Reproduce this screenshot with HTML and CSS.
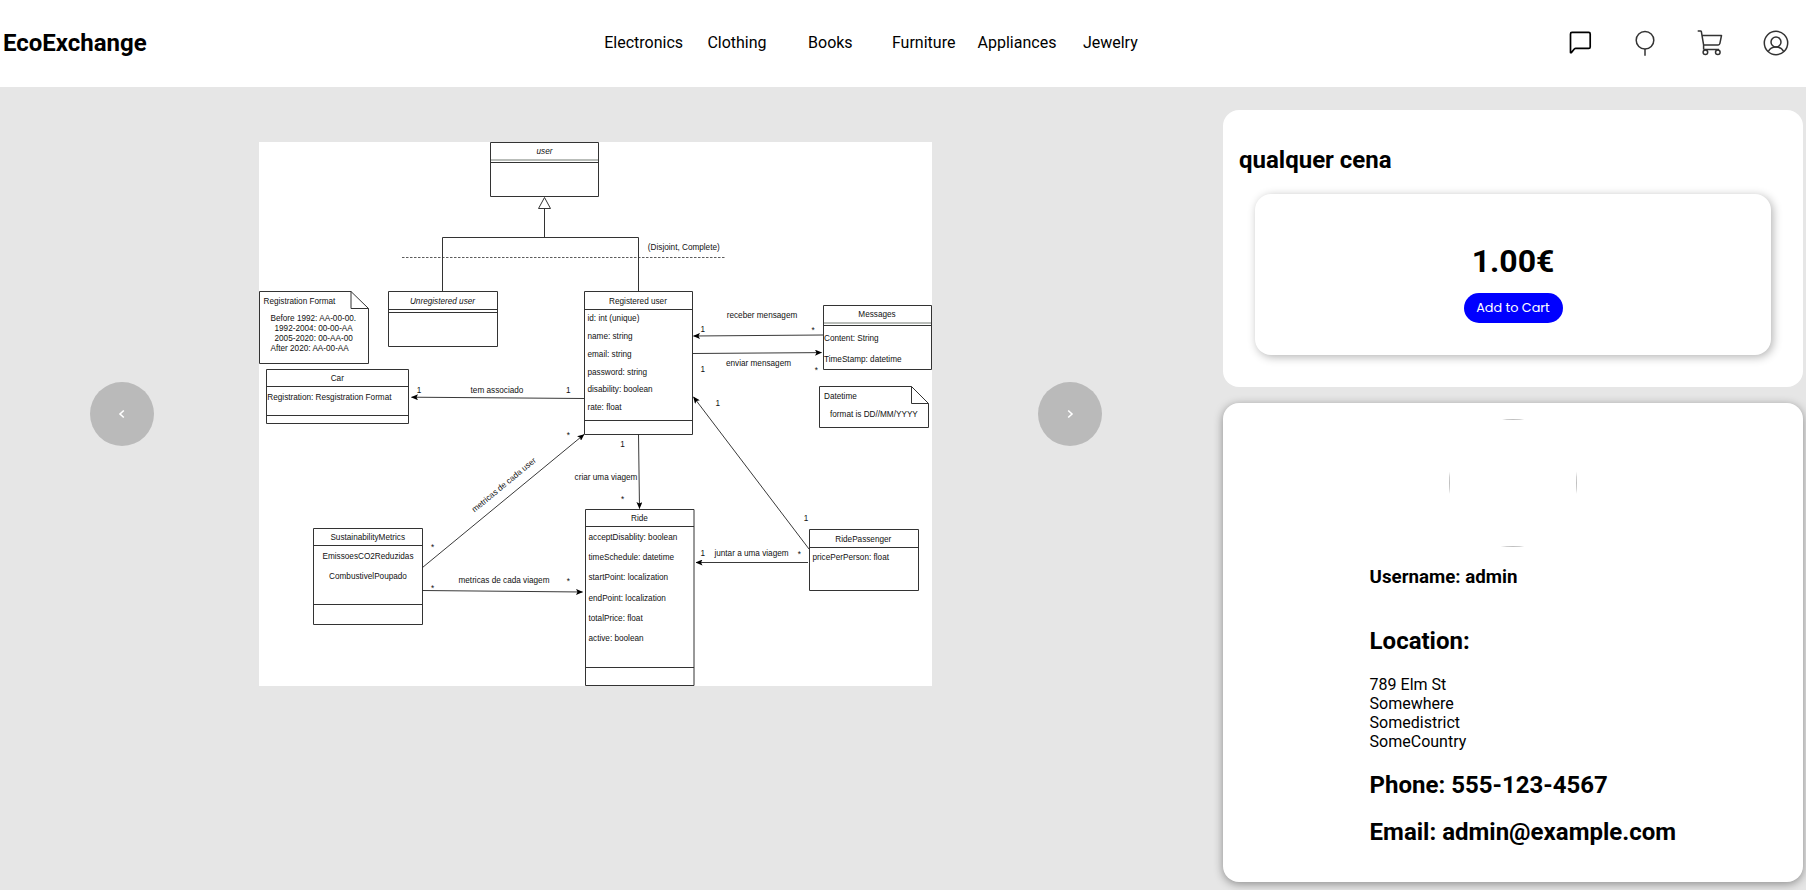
FILE: index.html
```html
<!DOCTYPE html>
<html lang="en">
<head>
<meta charset="utf-8">
<title>EcoExchange</title>
<link rel="stylesheet" href="styles.css">
</head>
<body>
<header class="topbar">
  <h1 class="logo">EcoExchange</h1>
  <nav class="categories">
    <a>Electronics</a><a>Clothing</a><a>Books</a><a>Furniture</a><a>Appliances</a><a>Jewelry</a>
  </nav>
  <div class="actions">
    <svg class="icon dark" viewBox="0 0 26 26"><path d="M3.500 22.600V3.900Q3.500 2.400 5 2.400H21.700Q23.200 2.400 23.200 3.900V16.900Q23.200 18.400 21.700 18.400H8.800Q7.900 18.400 7.300 19L4.300 22.600Z"/></svg>
    <svg class="icon" viewBox="0 0 26 26"><circle cx="13" cy="10.300" r="8.800"/><path d="M13 19v6.700"/></svg>
    <svg class="icon cart" viewBox="0 0 26 26"><path d="M.7 1H3.400Q4.200 1 4.400 1.800L6.600 14.900V19.500M4.800 5.500H24.500L22.900 13.400Q22.600 14.900 21.200 14.900H6.600M6.600 19.500H22"/><circle cx="8.400" cy="22.200" r="2.300"/><circle cx="20.800" cy="22.200" r="2.300"/></svg>
    <svg class="icon" viewBox="0 0 26 26"><circle cx="13" cy="13" r="11.700"/><circle cx="13" cy="12" r="5"/><path d="M5.300 21.500Q7.500 17.100 13 17.100T20.700 21.500"/></svg>
  </div>
</header>
<main class="page">
  <section class="gallery">
    <button class="arrow"><svg class="chevron" viewBox="0 0 8 10"><path d="M5.800 1.500L2 5L5.800 8.500"/></svg></button>
    <svg class="diagram" viewBox="259 142 673 544">
      <defs><marker id="head" viewBox="0 0 7 6" refX="6.500" refY="3" markerWidth="7" markerHeight="6" orient="auto" markerUnits="userSpaceOnUse"><path class="tip" d="M0 0L7 3L0 6L1.500 3Z"/></marker></defs>
      <g class="box">
        <path d="M490.500 142.500H598.500V196.500H490.500ZM490.500 162.500H598.500"/>
        <path d="M388.500 291.500H497.500V346.500H388.500ZM388.500 309.500H497.500M388.500 312.500H497.500"/>
        <path d="M259.500 291.500H351L368.500 308.500V363.500H259.500ZM351 291.500V308.500H368.500"/>
        <path d="M584.500 291.500H692.500V434.500H584.500ZM584.500 309.500H692.500M584.500 420.500H692.500"/>
        <path d="M266.500 369.500H408.500V423.500H266.500ZM266.500 386.500H408.500M266.500 415.500H408.500"/>
        <path d="M823.500 305.500H931.500V369.500H823.500ZM823.500 325.500H931.500"/>
        <path d="M819.500 386.500H911.500L928.500 403.500V427.500H819.500ZM911.500 386.500V403.500H928.500"/>
        <path d="M585.500 509.500H694V685.500H585.500ZM585.500 526.500H694M585.500 667.500H694"/>
        <path d="M809.500 529.500H918.500V590.500H809.500ZM809.500 547.500H918.500"/>
        <path d="M313.500 528.500H422.500V624.500H313.500ZM313.500 545.500H422.500M313.500 604.500H422.500"/>
        <path d="M544.500 197.500L550.500 208.500H538.500ZM544.500 208.500V237.500M442.500 291.500V237.500H638.500V291.500"/>
      </g>
      <path class="rule" d="M491 160H598M824 323H931"/>
      <path class="dash" d="M402 257.500H726"/>
      <g class="link">
        <path d="M584 398.500L411.500 397.200"/><path d="M823 335L693.500 336"/><path d="M693 353.500L821.500 352.600"/>
        <path d="M809 549L693.500 397"/><path d="M638.500 434.500L639.500 508.500"/><path d="M808 562.500H696"/>
        <path d="M422.500 567.500L584 434.500"/><path d="M422.500 590.500L582.500 592"/>
      </g>
      <g class="mid">
        <text class="it" x="544.500" y="154">user</text><text class="it" x="442.500" y="303.500">Unregistered user</text>
        <text x="638" y="303.500">Registered user</text><text x="337.300" y="381">Car</text>
        <text x="877" y="317">Messages</text><text x="639.500" y="521">Ride</text><text x="863.300" y="541.500">RidePassenger</text>
        <text x="367.700" y="540">SustainabilityMetrics</text><text x="368" y="558.500">EmissoesCO2Reduzidas</text><text x="368" y="579">CombustivelPoupado</text>
        <text x="683.800" y="250">(Disjoint, Complete)</text><text x="762" y="318">receber mensagem</text><text x="758.500" y="365.500">enviar mensagem</text>
        <text x="497" y="392.500">tem associado</text><text x="606" y="480">criar uma viagem</text><text x="504" y="583">metricas de cada viagem</text><text x="751.500" y="556">juntar a uma viagem</text>
        <text transform="translate(505.500 487) rotate(-39.500)">metricas de cada user</text>
        <text x="419" y="392.500">1</text><text x="568.300" y="392.500">1</text><text x="702.700" y="331.500">1</text><text x="702.700" y="372">1</text><text x="717.700" y="406">1</text>
        <text x="622.500" y="447">1</text><text x="702.700" y="556">1</text><text x="806" y="520.500">1</text>
        <text x="813" y="333">*</text><text x="816.300" y="373">*</text><text x="568.300" y="437.500">*</text><text x="622.500" y="502">*</text>
        <text x="432.500" y="549.500">*</text><text x="432.500" y="590.500">*</text><text x="568.300" y="584">*</text><text x="799.300" y="557">*</text>
      </g>
      <g>
        <text x="263.500" y="303.500">Registration Format</text>
        <text x="270.500" y="321">Before 1992: AA-00-00.</text><text x="274.500" y="331">1992-2004: 00-00-AA</text><text x="274.500" y="341">2005-2020: 00-AA-00</text><text x="270.500" y="350.500">After 2020: AA-00-AA</text>
        <text x="267.300" y="399.500">Registration: Resgistration Format</text>
        <text x="587.500" y="321">id: int (unique)</text><text x="587.500" y="339">name: string</text><text x="587.500" y="357">email: string</text><text x="587.500" y="374.500">password: string</text><text x="587.500" y="392">disability: boolean</text><text x="587.500" y="410">rate: float</text>
        <text x="824" y="341">Content: String</text><text x="824" y="361.500">TimeStamp: datetime</text>
        <text x="824" y="399">Datetime</text><text x="830" y="416.500">format is DD//MM/YYYY</text>
        <text x="588.500" y="539.500">acceptDisablity: boolean</text><text x="588.500" y="560">timeSchedule: datetime</text><text x="588.500" y="580">startPoint: localization</text><text x="588.500" y="600.500">endPoint: localization</text><text x="588.500" y="621">totalPrice: float</text><text x="588.500" y="641">active: boolean</text>
        <text x="812.500" y="560">pricePerPerson: float</text>
      </g>
    </svg>
    <button class="arrow"><svg class="chevron" viewBox="0 0 8 10"><path d="M2.200 1.500L6 5L2.200 8.500"/></svg></button>
  </section>
  <aside class="side">
    <section class="product">
      <h2>qualquer cena</h2>
      <div class="offer">
        <p class="price">1.00€</p>
        <button class="add">Add to Cart</button>
      </div>
    </section>
    <section class="seller">
      <div class="avatar"><div class="frame"></div></div>
      <div class="details">
        <h3>Username: admin</h3>
        <h2>Location:</h2>
        <p>789 Elm St<br>Somewhere<br>Somedistrict<br>SomeCountry</p>
        <h2 class="phone">Phone: 555-123-4567</h2>
        <h2 class="email">Email: admin@example.com</h2>
      </div>
    </section>
  </aside>
</main>
</body>
</html>
```
FILE: styles.css
```css
* { box-sizing: border-box; }
body { margin: 0; height: 890px; overflow: hidden; background: #e6e6e6; color: #000; font: 16px/19px Roboto, sans-serif; }
h1, h2, h3, p { margin: 0; }
h1, h2 { font-size: 24px; line-height: 28px; }
button { border: 0; padding: 0; }
.topbar { height: 87px; background: #fff; display: grid; grid-template-columns: 597px 560px 1fr; align-items: center; }
.logo { padding: 0 0 2px 3px; }
.categories { display: grid; grid-template-columns: repeat(6, 1fr); text-align: center; padding-bottom: 2px; }
.actions { display: flex; justify-content: flex-end; gap: 39.300px; padding: 0 17px 1px 0; }
.icon { width: 26px; height: 26px; fill: none; stroke: #333; stroke-width: 1.500; stroke-linejoin: round; }
.cart { margin: 0 1px 0 -1px; }
.dark { stroke: #000; stroke-width: 1.700; }
.page { display: flex; height: 803px; }
.gallery { width: 1223px; padding: 55px 121px 0 90px; display: flex; gap: 105px; align-items: flex-start; }
.arrow { width: 64px; height: 64px; margin-top: 240px; border-radius: 50%; background: #bababa; display: flex; align-items: center; justify-content: center; flex: none; }
.chevron { width: 8px; height: 10px; fill: none; stroke: #fff; stroke-width: 1.600; }
.diagram { width: 673px; height: 544px; background: #fff; display: block; flex: none; }
.diagram + .arrow { margin-left: 1px; }
.diagram text { font: 8.200px "Liberation Sans", Arial, sans-serif; fill: #111; }
.mid text { text-anchor: middle; }
.diagram .it { font-style: italic; }
.box path { fill: #fff; stroke: #333; stroke-width: 1; }
.box path:last-child { fill: none; }
.rule { stroke: #b9bdb9; stroke-width: 2; }
.dash { stroke: #333; stroke-width: .8; stroke-dasharray: 2.500 1.500; }
.link path { fill: none; stroke: #222; stroke-width: .9; marker-end: url(#head); }
.tip { fill: #000; }
.side { width: 580px; padding-top: 23px; display: flex; flex-direction: column; gap: 16px; }
.product, .seller, .offer { background: #fff; border-radius: 16px; }
.product { height: 277px; padding: 36px 32px 0; }
.product h2 { margin: 0 0 20px -16px; }
.offer { height: 161px; padding-top: 48px; display: flex; flex-direction: column; align-items: center; gap: 13px; box-shadow: 2px 2px 10px rgba(0, 0, 0, .3); }
.price { font-size: 32px; line-height: 38px; font-weight: 700; }
.add { width: 99px; height: 30px; border-radius: 15px; background: #00f; color: #fff; font: 12.800px/30px Poppins, Lato, sans-serif; }
.seller { height: 479px; padding-top: 16px; box-shadow: 0 2px 10px rgba(0, 0, 0, .4); }
.avatar { width: 128px; height: 128px; margin: 0 auto; border-radius: 50%; overflow: hidden; }
.frame { height: 100%; border: 1px solid #c0c0c0; }
.details { padding: 19px 0 0 146.600px; }
.details h3 { font-size: 18.720px; line-height: 22px; margin-bottom: 39px; }
.details p { margin: 20px 0; }
.email { margin-top: 19px; }
```
